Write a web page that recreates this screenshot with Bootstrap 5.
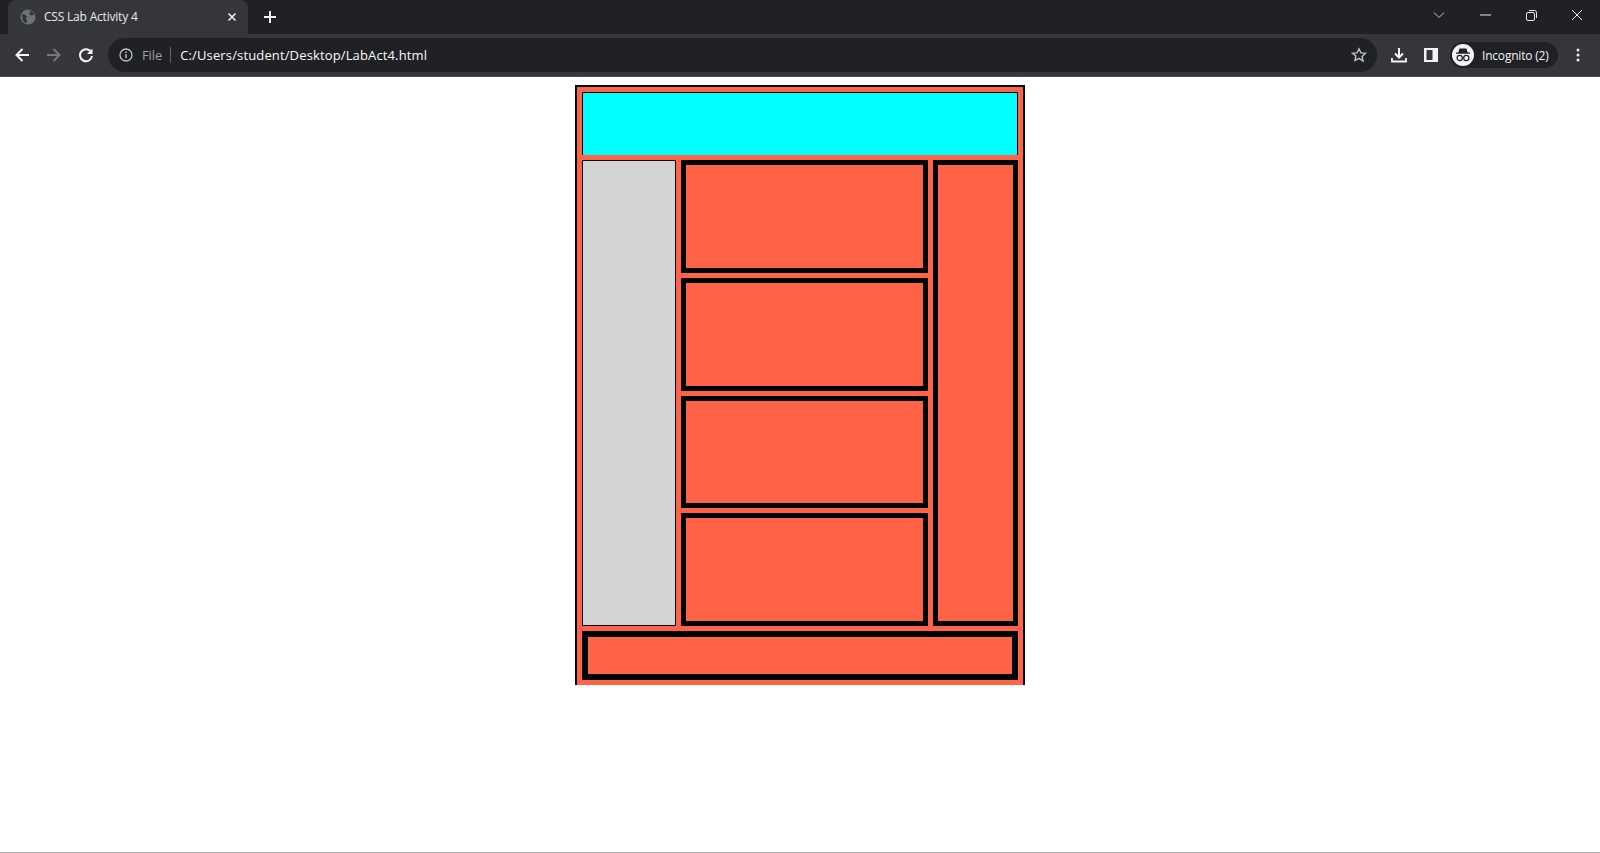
<!DOCTYPE html>
<html lang="en">
<head>
    <meta charset="UTF-8">
    <title>CSS Lab Activity 4</title>
    <link href="https://cdn.jsdelivr.net/npm/bootstrap@5.3.3/dist/css/bootstrap.min.css" rel="stylesheet">
    <style>
        html, body { height: 853px; overflow: hidden; background: #fff; }
        .browser-shell { height: 853px; font-family: "Open Sans", "Liberation Sans", sans-serif; }

        /* browser chrome */
        .tab-strip { height: 34px; background: #202124; padding-left: 8px; }
        .tab-item { width: 240px; height: 34px; background: #35363a; border-radius: 8px 8px 0 0; padding: 0 11px 0 12px; color: #e8eaed; font-size: 12px; }
        .tab-title { margin-left: 8px; letter-spacing: -.2px; }
        .new-tab { width: 32px; margin-left: 6px; }
        .win-btn { width: 46px; height: 30px; }
        .tool-bar { height: 42px; background: #35363a; padding: 4px 0 4px 6px; }
        .nav-btn { width: 32px; height: 34px; }
        .tool-gap { margin-left: 6px; }
        .omni-box { height: 34px; width: 1269px; margin-left: 6px; background: #202124; border-radius: 17px; padding: 0 10px 0 11px; font-size: 13px; color: #e8eaed; }
        .omni-file { color: #9aa0a6; margin-left: 9px; padding-top: 1px; letter-spacing: -.1px; }
        .omni-sep { width: 1px; height: 16px; background: #5f6368; margin: 0 9px 0 8px; }
        .omni-url { padding-top: 1px; letter-spacing: .14px; color: #f8f9fa; }
        .incognito-pill { height: 26px; width: 108px; margin-left: 3px; background: #202124; border-radius: 13px; color: #f1f3f4; font-size: 12px; padding-left: 2px; }
        .incognito-face { width: 22px; height: 22px; border-radius: 50%; background: #f1f3f4; }
        .incognito-label { margin-left: 8px; padding-top: 1px; letter-spacing: -.2px; }
        .page-area { border-top: 1px solid #4a4b4f; border-bottom: 1px solid #b4b4b4; }

        /* layout boxes of the page */
        .lab-wrap { width: 450px; height: 600px; margin-top: 8px; padding: 5px; background: tomato; border: 2px solid #000; border-bottom: 0; gap: 5px; }
        .lab-head { height: 63px; background: cyan; border: 1px solid #000; border-bottom: 0; }
        .lab-mid { height: 466px; gap: 5px; }
        .lab-left { width: 94px; background: lightgray; border: 1px solid #000; }
        .lab-center { width: 247px; gap: 5px; }
        .lab-block { flex: 1 1 0; background: tomato; border: 5px solid #000; }
        .lab-right { width: 85px; background: tomato; border: 5px solid #000; }
        .lab-foot { height: 49px; background: tomato; border: 6px solid #000; }
    </style>
</head>
<body>
<div class="browser-shell d-flex flex-column">
    <div class="tab-strip d-flex flex-shrink-0">
        <div class="tab-item d-flex align-items-center">
            <svg width="16" height="16" viewBox="0 0 16 16"><circle cx="8" cy="8" r="7.5" fill="#6f7276"/><path d="M2 5l3 .5 2 2-1 2 1 2-.5 3L3 12zM9 1l1.500 2L9 5l2 1.500 3.500-1L13 3z" fill="#35363a"/></svg>
            <span class="tab-title flex-grow-1">CSS Lab Activity 4</span>
            <svg width="10" height="10" viewBox="0 0 10 10"><path d="M1.500 1.500l7 7M8.500 1.500l-7 7" stroke="#e8eaed" stroke-width="1.700"/></svg>
        </div>
        <div class="new-tab d-flex align-items-center justify-content-center">
            <svg width="14" height="14" viewBox="0 0 14 14"><path d="M7 1v12M1 7h12" stroke="#f1f3f4" stroke-width="2"/></svg>
        </div>
        <div class="flex-grow-1"></div>
        <div class="win-btn d-flex align-items-center justify-content-center">
            <svg width="12" height="8" viewBox="0 0 12 8"><path d="M1 1.500l5 5 5-5" fill="none" stroke="#c4c7c5" stroke-width="1"/></svg>
        </div>
        <div class="win-btn d-flex align-items-center justify-content-center">
            <svg width="11" height="2" viewBox="0 0 11 2"><path d="M0 1h11" stroke="#e8eaed" stroke-width="1"/></svg>
        </div>
        <div class="win-btn d-flex align-items-center justify-content-center">
            <svg width="11" height="11" viewBox="0 0 11 11"><rect x=".5" y="2.500" width="8" height="8" rx="1.500" fill="none" stroke="#e8eaed"/><path d="M3 .5h5.500a2 2 0 0 1 2 2V8" fill="none" stroke="#e8eaed"/></svg>
        </div>
        <div class="win-btn d-flex align-items-center justify-content-center">
            <svg width="12" height="12" viewBox="0 0 12 12"><path d="M1 1l10 10M11 1L1 11" stroke="#e8eaed" stroke-width="1"/></svg>
        </div>
    </div>

    <div class="tool-bar d-flex align-items-center flex-shrink-0">
        <div class="nav-btn d-flex align-items-center justify-content-center">
            <svg width="16" height="16" viewBox="0 0 16 16"><path d="M15 8H2.500M8.500 2L2.500 8l6 6" fill="none" stroke="#f1f3f4" stroke-width="2"/></svg>
        </div>
        <div class="nav-btn d-flex align-items-center justify-content-center">
            <svg width="16" height="16" viewBox="0 0 16 16"><path d="M1 8h12.500M7.500 2l6 6-6 6" fill="none" stroke="#75777b" stroke-width="2"/></svg>
        </div>
        <div class="nav-btn d-flex align-items-center justify-content-center">
            <svg width="16" height="16" viewBox="0 0 16 16"><path d="M13.200 5.200A6 6 0 1 0 14 9" fill="none" stroke="#f1f3f4" stroke-width="2"/><path d="M14.500 1.500v5.500H9z" fill="#f1f3f4"/></svg>
        </div>
        <div class="omni-box d-flex align-items-center">
            <svg width="14" height="14" viewBox="0 0 14 14"><circle cx="7" cy="7" r="6" fill="none" stroke="#bdc1c6" stroke-width="1.300"/><path d="M7 6v4.200M7 3.600v1.300" stroke="#bdc1c6" stroke-width="1.400"/></svg>
            <span class="omni-file">File</span>
            <span class="omni-sep"></span>
            <span class="omni-url">C:/Users/student/Desktop/LabAct4.html</span>
            <span class="flex-grow-1"></span>
            <svg width="16" height="16" viewBox="0 0 16 16"><path d="M8 1.800l1.900 4.100 4.500.5-3.300 3.100.9 4.500L8 11.300l-4 2.200.9-4.500L1.600 6.400l4.500-.5z" fill="none" stroke="#bdc1c6" stroke-width="1.400"/></svg>
        </div>
        <div class="nav-btn tool-gap d-flex align-items-center justify-content-center">
            <svg width="16" height="16" viewBox="0 0 16 16"><path d="M8 1v9M4 6.500L8 10.500l4-4" fill="none" stroke="#f1f3f4" stroke-width="2"/><path d="M1 11v3.500h14V11" fill="none" stroke="#f1f3f4" stroke-width="1.800"/></svg>
        </div>
        <div class="nav-btn d-flex align-items-center justify-content-center">
            <svg width="14" height="14" viewBox="0 0 14 14"><path d="M0 0h14v14H0z" fill="#f1f3f4"/><path d="M2.500 2h6v10h-6z" fill="#35363a"/></svg>
        </div>
        <div class="incognito-pill d-flex align-items-center">
            <div class="incognito-face d-flex align-items-center justify-content-center">
                <svg width="18" height="16" viewBox="0 0 18 16"><path d="M5.500 1.500h7l1.200 4H16v1.200H2V5.500h2.300z" fill="#202124"/><circle cx="5.700" cy="11" r="2.600" fill="none" stroke="#202124" stroke-width="1.200"/><circle cx="12.300" cy="11" r="2.600" fill="none" stroke="#202124" stroke-width="1.200"/><path d="M8.300 10.500h1.400" stroke="#202124"/></svg>
            </div>
            <span class="incognito-label">Incognito (2)</span>
        </div>
        <div class="nav-btn d-flex align-items-center justify-content-center ms-1">
            <svg width="4" height="14" viewBox="0 0 4 14"><circle cx="2" cy="2" r="1.500" fill="#e8eaed"/><circle cx="2" cy="7" r="1.500" fill="#e8eaed"/><circle cx="2" cy="12" r="1.500" fill="#e8eaed"/></svg>
        </div>
    </div>

    <div class="page-area flex-grow-1 d-flex justify-content-center">
        <div class="lab-wrap d-flex flex-column">
            <div class="lab-head"></div>
            <div class="lab-mid d-flex">
                <div class="lab-left"></div>
                <div class="lab-center d-flex flex-column">
                    <div class="lab-block"></div>
                    <div class="lab-block"></div>
                    <div class="lab-block"></div>
                    <div class="lab-block"></div>
                </div>
                <div class="lab-right"></div>
            </div>
            <div class="lab-foot"></div>
        </div>
    </div>
</div>
<script src="https://cdn.jsdelivr.net/npm/bootstrap@5.3.3/dist/js/bootstrap.bundle.min.js"></script>
</body>
</html>
